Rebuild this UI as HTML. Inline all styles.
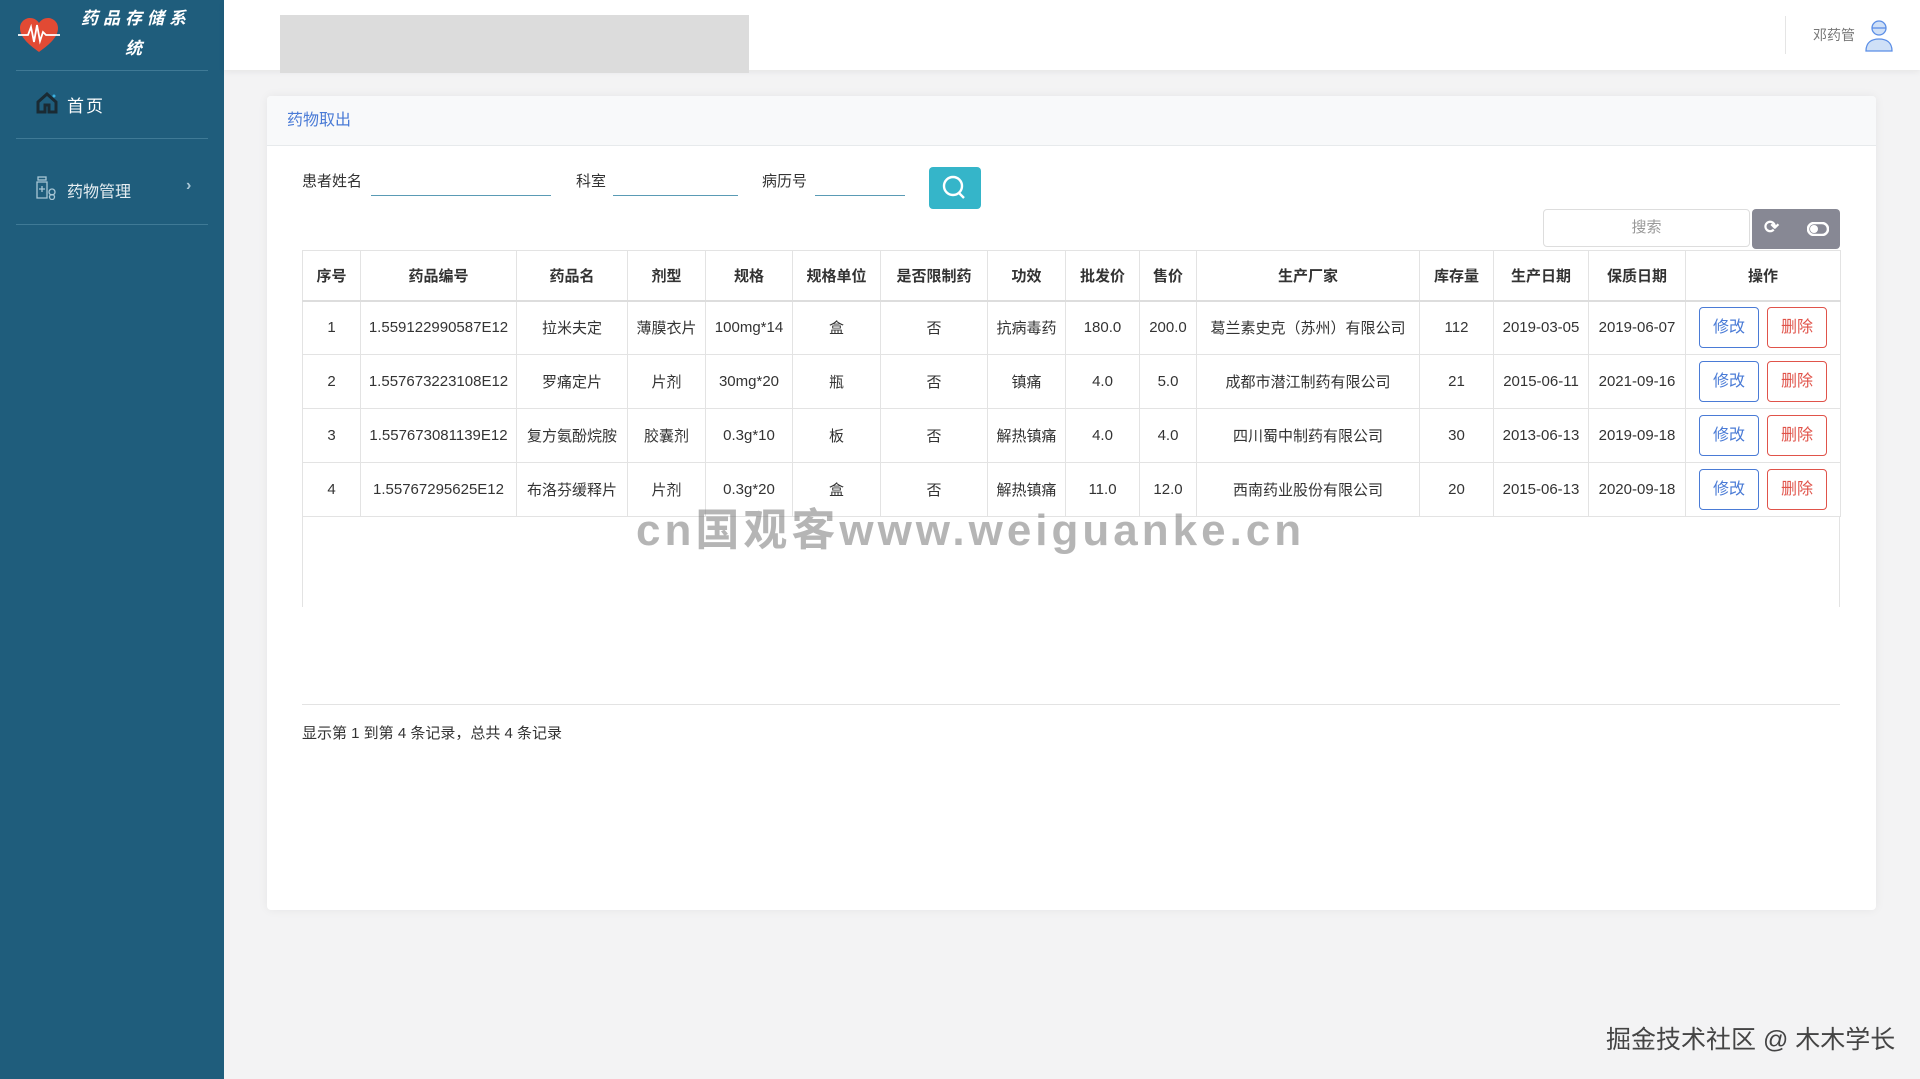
<!DOCTYPE html>
<html><head><meta charset="utf-8"><style>
*{box-sizing:border-box;margin:0;padding:0}
body{width:1920px;height:1079px;overflow:hidden;background:#f3f3f4;font-family:"Liberation Sans","Noto Sans CJK SC",sans-serif;color:#333;position:relative;font-size:15px}
.side{position:absolute;left:0;top:0;width:224px;height:1079px;background:#1f5d7c}
.hr{position:absolute;left:16px;width:192px;height:1px;background:#3f7a96}
.top{position:absolute;left:224px;top:0;right:0;height:70px;background:#fff;box-shadow:0 2px 6px rgba(0,0,0,.06)}
.card{position:absolute;left:267px;top:96px;width:1609px;height:814px;background:#fff;border-radius:4px;box-shadow:0 0 10px rgba(0,0,0,.06)}
.ch{height:50px;background:#f8f9fa;border-bottom:1px solid #e7eaec;color:#4a7bd6;font-size:16px;line-height:50px;padding-left:20px;border-radius:4px 4px 0 0}
.a{position:absolute}
table{border-collapse:collapse;position:absolute;left:302px;top:250px;table-layout:fixed;width:1538px;font-size:15px}
td,th{border:1px solid #e3e3e3;text-align:center;height:54px;white-space:nowrap;overflow:hidden}
th{height:50px;font-weight:bold;color:#333;border-bottom:2px solid #ddd}
.b{display:inline-block;width:60px;height:41px;line-height:39px;border-radius:4px;font-size:16px;background:#fff}
.m{border:1px solid #4a7bd6;color:#4a7bd6;margin-right:8px}
.d{border:1px solid #e0534a;color:#e0534a}
</style></head><body>
<div class="side">
<svg class="a" style="left:18px;top:17px" width="42" height="36" viewBox="0 0 42 36"><path d="M21 35 C10 27 2 20 2 11 C2 5 7 1 12 1 C16 1 19 3 21 6 C23 3 26 1 30 1 C35 1 40 5 40 11 C40 20 32 27 21 35Z" fill="#e24a34"/><path d="M0 18 H10 L13 10 L16 25 L19 8 L22 24 L25 15 L28 18 H42" stroke="#fff" stroke-width="1.8" fill="none"/></svg>
<div class="a" style="left:78px;top:4px;width:116px;text-align:center;color:#fff;font-weight:bold;font-style:italic;font-size:17px;line-height:30px;letter-spacing:5px">药品存储系统</div>
<div class="hr" style="top:70px"></div>
<svg class="a" style="left:36px;top:92px" width="22" height="22" viewBox="0 0 22 22"><path d="M2 10 L11 2 L20 10 V20 H13 V13 H9 V20 H2Z" fill="none" stroke="#1a2a33" stroke-width="3"/><circle cx="18" cy="4" r="1.5" fill="#3ab0e0"/></svg>
<div class="a" style="left:67px;top:92px;color:#fff;font-size:17px;letter-spacing:2px">首页</div>
<div class="hr" style="top:138px"></div>
<svg class="a" style="left:34px;top:176px" width="24" height="24" viewBox="0 0 24 24" fill="none" stroke="#a9c7d6" stroke-width="1.3"><rect x="4" y="1" width="8" height="3"/><path d="M3 6 H13 V22 H3Z"/><path d="M8 10 V16 M5 13 H11"/><circle cx="18" cy="16" r="3"/><circle cx="18" cy="21" r="2.5"/></svg>
<div class="a" style="left:67px;top:178px;color:#e6eef2;font-size:16px">药物管理</div>
<div class="a" style="left:186px;top:177px;color:#a9c7d6;font-size:16px;font-weight:bold">›</div>
<div class="hr" style="top:224px"></div>
</div>
<div class="top">
<div class="a" style="left:56px;top:15px;width:469px;height:58px;background:#dcdcdc"></div>
<div class="a" style="left:1561px;top:16px;width:1px;height:38px;background:#e5e5e5"></div>
<div class="a" style="left:1589px;top:25px;color:#777;font-size:14px">邓药管</div>
<svg class="a" style="left:1640px;top:18px" width="30" height="34" viewBox="0 0 30 34" fill="#cfe0f7" stroke="#5b8ee6" stroke-width="1.3"><circle cx="15" cy="10" r="7"/><path d="M8 10 H22" /><path d="M2 33 C2 24 8 21 15 21 C22 21 28 24 28 33Z"/></svg>
</div>
<div class="card"><div class="ch">药物取出</div></div>
<div class="a" style="left:302px;top:170px;font-size:15px">患者姓名</div>
<div class="a" style="left:371px;top:195px;width:180px;height:1px;background:#5a9bb5"></div>
<div class="a" style="left:576px;top:170px">科室</div>
<div class="a" style="left:613px;top:195px;width:125px;height:1px;background:#5a9bb5"></div>
<div class="a" style="left:762px;top:170px">病历号</div>
<div class="a" style="left:815px;top:195px;width:90px;height:1px;background:#5a9bb5"></div>
<div class="a" style="left:929px;top:167px;width:52px;height:42px;background:#35b5c9;border-radius:4px"><svg width="52" height="42" viewBox="0 0 52 42" fill="none" stroke="#fff" stroke-width="2.4"><circle cx="24" cy="19" r="9"/><path d="M30 26 L35 31"/></svg></div>
<div class="a" style="left:1543px;top:209px;width:207px;height:38px;border:1px solid #ddd;border-radius:4px;text-align:center;line-height:36px;color:#999">搜索</div>
<div class="a" style="left:1752px;top:209px;width:88px;height:40px;background:#878894;border-radius:4px;color:#fff;font-size:18px;font-weight:bold"><span class="a" style="left:12px;top:8px">⟳</span><svg class="a" style="left:55px;top:13px" width="22" height="14" viewBox="0 0 22 14"><rect x="1" y="1" width="20" height="12" rx="6" fill="none" stroke="#fff" stroke-width="2.5"/><circle cx="7" cy="7" r="4" fill="#fff"/></svg></div>
<table>
<colgroup><col width="58"><col width="156"><col width="111"><col width="78"><col width="87"><col width="88"><col width="107"><col width="78"><col width="74"><col width="57"><col width="223"><col width="74"><col width="95"><col width="97"><col width="155"></colgroup>
<tr><th>序号</th><th>药品编号</th><th>药品名</th><th>剂型</th><th>规格</th><th>规格单位</th><th>是否限制药</th><th>功效</th><th>批发价</th><th>售价</th><th>生产厂家</th><th>库存量</th><th>生产日期</th><th>保质日期</th><th>操作</th></tr>
<tr><td>1</td><td>1.559122990587E12</td><td>拉米夫定</td><td>薄膜衣片</td><td>100mg*14</td><td>盒</td><td>否</td><td>抗病毒药</td><td>180.0</td><td>200.0</td><td>葛兰素史克（苏州）有限公司</td><td>112</td><td>2019-03-05</td><td>2019-06-07</td><td><span class="b m">修改</span><span class="b d">删除</span></td></tr>
<tr><td>2</td><td>1.557673223108E12</td><td>罗痛定片</td><td>片剂</td><td>30mg*20</td><td>瓶</td><td>否</td><td>镇痛</td><td>4.0</td><td>5.0</td><td>成都市潜江制药有限公司</td><td>21</td><td>2015-06-11</td><td>2021-09-16</td><td><span class="b m">修改</span><span class="b d">删除</span></td></tr>
<tr><td>3</td><td>1.557673081139E12</td><td>复方氨酚烷胺</td><td>胶囊剂</td><td>0.3g*10</td><td>板</td><td>否</td><td>解热镇痛</td><td>4.0</td><td>4.0</td><td>四川蜀中制药有限公司</td><td>30</td><td>2013-06-13</td><td>2019-09-18</td><td><span class="b m">修改</span><span class="b d">删除</span></td></tr>
<tr><td>4</td><td>1.55767295625E12</td><td>布洛芬缓释片</td><td>片剂</td><td>0.3g*20</td><td>盒</td><td>否</td><td>解热镇痛</td><td>11.0</td><td>12.0</td><td>西南药业股份有限公司</td><td>20</td><td>2015-06-13</td><td>2020-09-18</td><td><span class="b m">修改</span><span class="b d">删除</span></td></tr>
</table>
<div class="a" style="left:302px;top:517px;width:1px;height:90px;background:#e3e3e3"></div>
<div class="a" style="left:1839px;top:517px;width:1px;height:90px;background:#e3e3e3"></div>
<div class="a" style="left:302px;top:704px;width:1538px;height:1px;background:#e3e3e3"></div>
<div class="a" style="left:302px;top:722px;font-size:15px">显示第 1 到第 4 条记录，总共 4 条记录</div>
<div class="a" style="left:636px;top:494px;font-size:44px;font-weight:bold;color:rgba(120,120,120,.55);letter-spacing:4px">cn国观客www.weiguanke.cn</div>
<div class="a" style="left:1606px;top:1020px;font-size:25px;color:#444">掘金技术社区 @ 木木学长</div>
</body></html>
